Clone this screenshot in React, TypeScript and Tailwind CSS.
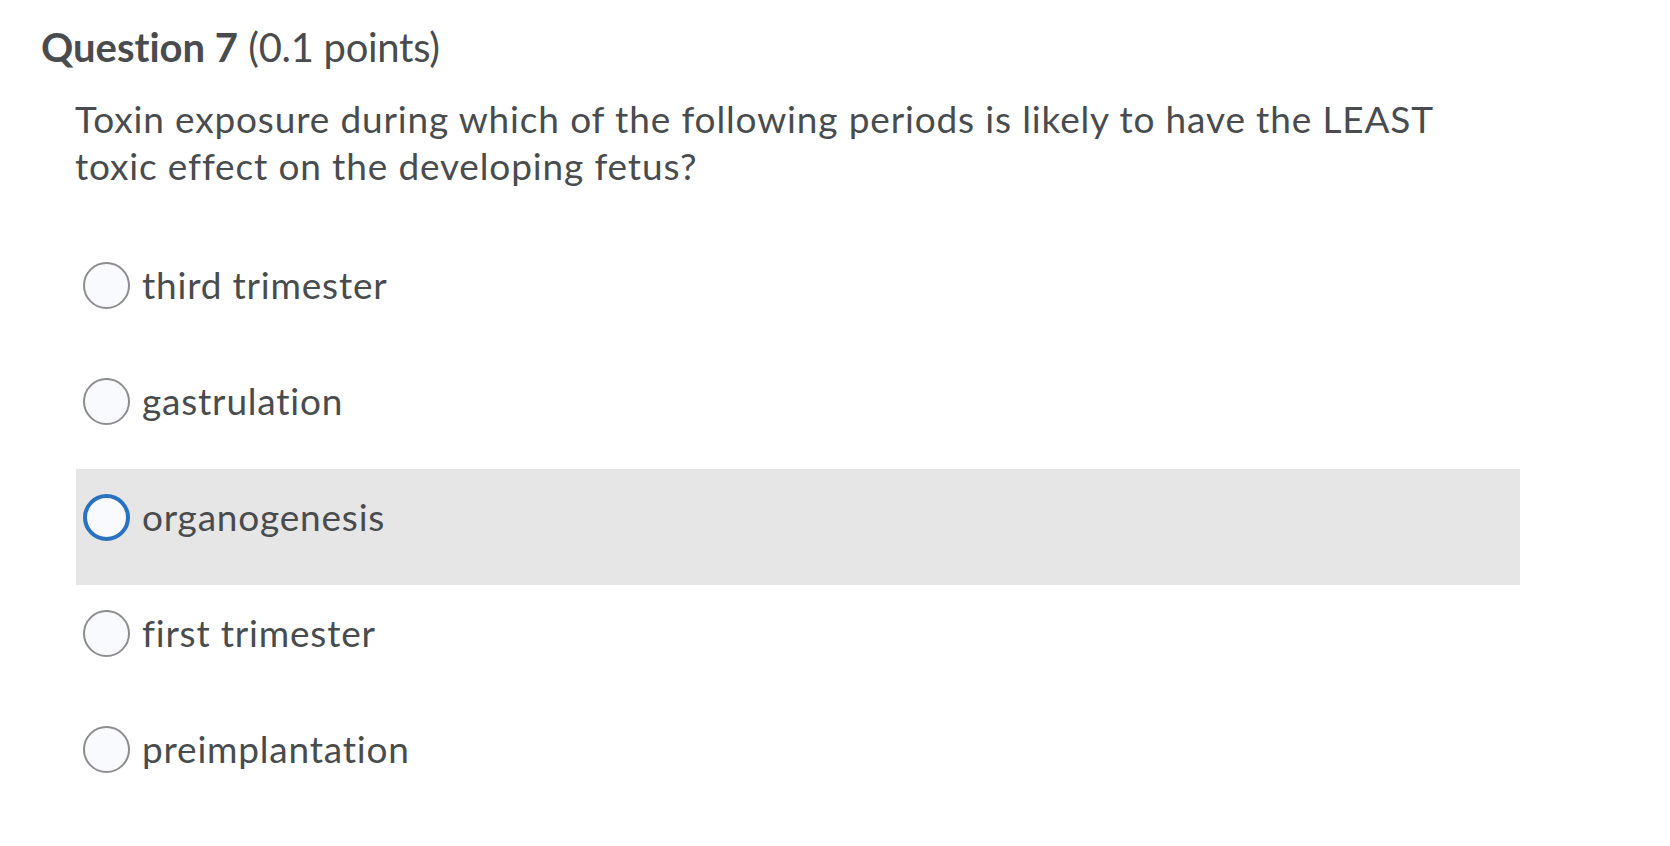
import React from "react";

const options = [
  { label: "third trimester", selected: false },
  { label: "gastrulation", selected: false },
  { label: "organogenesis", selected: true },
  { label: "first trimester", selected: false },
  { label: "preimplantation", selected: false },
];

export default function App() {
  return (
    <div className="w-[1670px] h-[846px] bg-white text-[#494c4e] font-['Lato','Noto_Sans',sans-serif] overflow-hidden [font-variant-ligatures:none]">
      <h2 className="pl-[41px] pt-[22px] text-[40px] leading-[50px]">
        <span className="font-bold">Question 7</span>{" "}
        <span className="font-normal tracking-[-0.3px]">(0.1 points)</span>
      </h2>
      <p className="mt-[24px] pl-[75px] text-[37px] leading-[46.8px] tracking-[0.85px] w-[1550px]">
        Toxin exposure during which of the following periods is likely to have the LEAST
        <br />
        toxic effect on the developing fetus?
      </p>
      <div className="mt-[47px] ml-[76px] w-[1444px]">
        {options.map((o) => (
          <div
            key={o.label}
            className={
              "h-[116px] flex items-start pl-[7px] pt-[25px] " +
              (o.selected ? "bg-[#e6e6e6]" : "")
            }
          >
            <div className="h-[47px] flex items-center gap-[12px]">
              <span
                className={
                  "block w-[47px] h-[47px] rounded-full bg-[#f9fafe] " +
                  (o.selected
                    ? "border-[4px] border-[#2a72c0]"
                    : "border-[2px] border-[#8d8d8d]")
                }
              />
              <span className="text-[37px] leading-[46.8px] tracking-[0.8px]">{o.label}</span>
            </div>
          </div>
        ))}
      </div>
    </div>
  );
}
